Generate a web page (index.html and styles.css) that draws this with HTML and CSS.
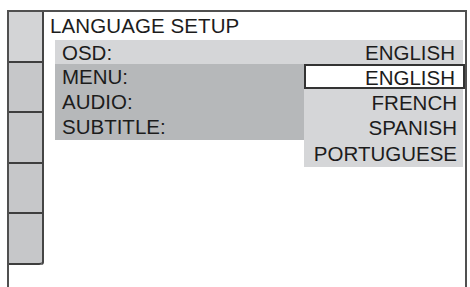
FILE: index.html
```html
<!DOCTYPE html>
<html>
<head>
<meta charset="utf-8">
<link rel="stylesheet" href="styles.css">
</head>
<body>
<div class="frame">
  <div class="sidebar">
    <div class="cell cell-top"></div>
    <div class="cell"></div>
    <div class="cell"></div>
    <div class="cell"></div>
    <div class="cell"></div>
  </div>
  <div class="main">
    <div class="title">LANGUAGE SETUP</div>
    <div class="osd-row">
      <span>OSD:</span>
      <span>ENGLISH</span>
    </div>
    <div class="lower">
      <div class="items">
        <div class="item">MENU:</div>
        <div class="item">AUDIO:</div>
        <div class="item">SUBTITLE:</div>
      </div>
      <div class="dropdown">
        <div class="selected">ENGLISH</div>
        <div class="list">
          <div class="option">FRENCH</div>
          <div class="option">SPANISH</div>
          <div class="option">PORTUGUESE</div>
        </div>
      </div>
    </div>
  </div>
</div>
</body>
</html>
```
FILE: styles.css
```css
html, body {
  margin: 0;
  padding: 0;
  background: #ffffff;
}
body {
  width: 470px;
  height: 287px;
  overflow: hidden;
  font-family: "Liberation Sans", Arial, sans-serif;
  font-size: 20.5px;
  color: #1c1c1c;
}
.frame {
  margin: 10px 0 0 7px;
  width: 456px;
  height: 277px;
  border-top: 2px solid #505050;
  border-left: 2px solid #505050;
  border-right: 2px solid #505050;
  display: flex;
  align-items: flex-start;
}
.sidebar {
  width: 33px;
  border-right: 2px solid #454545;
  border-bottom-right-radius: 3px;
  display: flex;
  flex-direction: column;
  background: #c6c7c9;
}
.cell {
  height: 48.6px;
  border-bottom: 2px solid #3e3e3e;
  background: #c6c7c9;
}
.cell-top {
  background: #d3d4d6;
}
.cell:last-child {
  border-bottom-right-radius: 3px;
}
.main {
  flex: 1;
  display: flex;
  flex-direction: column;
}
.title {
  height: 28px;
  line-height: 28px;
  padding-left: 6px;
  letter-spacing: 0.1px;
}
.osd-row {
  margin: 0 2px 0 11px;
  height: 24px;
  line-height: 25px;
  background: #d5d6d8;
  display: flex;
  justify-content: space-between;
  padding: 0 8px 0 7px;
}
.lower {
  display: flex;
  align-items: flex-start;
  margin-left: 11px;
}
.items {
  width: 249px;
  height: 76px;
  background: #b6b8ba;
  padding-left: 7px;
  box-sizing: border-box;
}
.item {
  height: 24px;
  line-height: 25px;
}
.item + .item {
  margin-top: 1px;
}
.dropdown {
  flex: 1;
  display: flex;
  flex-direction: column;
}
.selected {
  height: 21px;
  line-height: 23px;
  border: 2px solid #333333;
  background: #ffffff;
  text-align: right;
  padding-right: 8px;
}
.list {
  margin-right: 2px;
  background: #d5d6d8;
  padding: 1px 6px 1px 0;
  text-align: right;
}
.option {
  height: 25.3px;
  line-height: 25px;
}
```
